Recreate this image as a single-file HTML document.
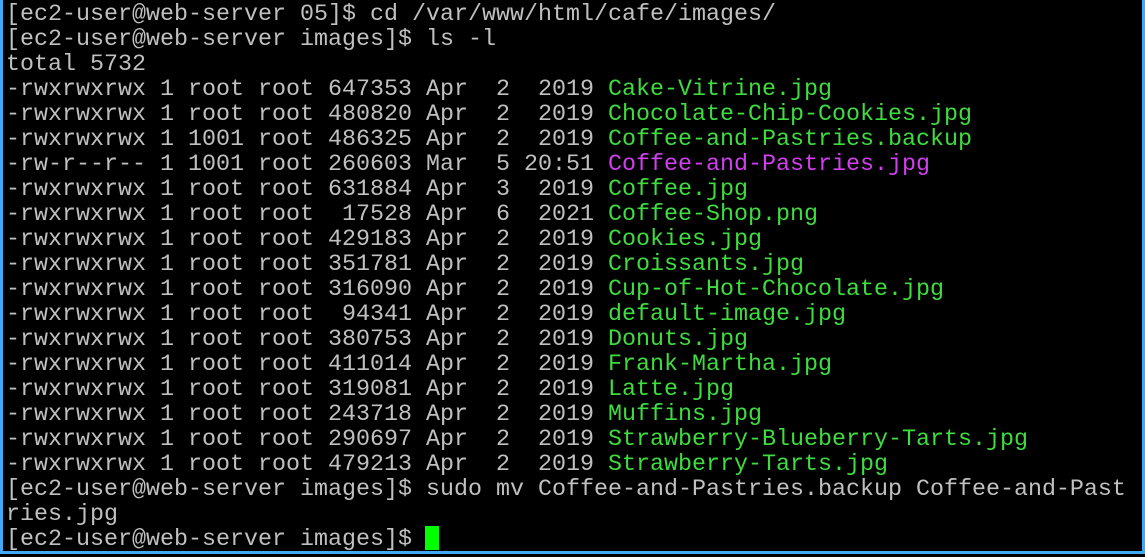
<!DOCTYPE html>
<html><head><style>
html,body{margin:0;padding:0;background:#000;}
body{width:1145px;height:557px;overflow:hidden;position:relative;}
.frame{position:absolute;left:0;top:0;width:1139px;height:551px;border:3px solid #3fa9f5;border-top:none;}
pre{position:absolute;left:6px;top:3px;margin:0;font-family:"Liberation Mono",monospace;font-size:23.33px;line-height:25px;color:#c0c0c0;white-space:pre;}
.g{color:#3fdc3f}.m{color:#d23ff0}
.cur{position:absolute;left:425px;top:526px;width:14px;height:24px;background:#00ff00;}
</style></head><body>
<div class="frame"></div>
<pre>[ec2-user@web-server 05]$ cd /var/www/html/cafe/images/
[ec2-user@web-server images]$ ls -l
total 5732
-rwxrwxrwx 1 root root 647353 Apr  2  2019 <span class="g">Cake-Vitrine.jpg</span>
-rwxrwxrwx 1 root root 480820 Apr  2  2019 <span class="g">Chocolate-Chip-Cookies.jpg</span>
-rwxrwxrwx 1 1001 root 486325 Apr  2  2019 <span class="g">Coffee-and-Pastries.backup</span>
-rw-r--r-- 1 1001 root 260603 Mar  5 20:51 <span class="m">Coffee-and-Pastries.jpg</span>
-rwxrwxrwx 1 root root 631884 Apr  3  2019 <span class="g">Coffee.jpg</span>
-rwxrwxrwx 1 root root  17528 Apr  6  2021 <span class="g">Coffee-Shop.png</span>
-rwxrwxrwx 1 root root 429183 Apr  2  2019 <span class="g">Cookies.jpg</span>
-rwxrwxrwx 1 root root 351781 Apr  2  2019 <span class="g">Croissants.jpg</span>
-rwxrwxrwx 1 root root 316090 Apr  2  2019 <span class="g">Cup-of-Hot-Chocolate.jpg</span>
-rwxrwxrwx 1 root root  94341 Apr  2  2019 <span class="g">default-image.jpg</span>
-rwxrwxrwx 1 root root 380753 Apr  2  2019 <span class="g">Donuts.jpg</span>
-rwxrwxrwx 1 root root 411014 Apr  2  2019 <span class="g">Frank-Martha.jpg</span>
-rwxrwxrwx 1 root root 319081 Apr  2  2019 <span class="g">Latte.jpg</span>
-rwxrwxrwx 1 root root 243718 Apr  2  2019 <span class="g">Muffins.jpg</span>
-rwxrwxrwx 1 root root 290697 Apr  2  2019 <span class="g">Strawberry-Blueberry-Tarts.jpg</span>
-rwxrwxrwx 1 root root 479213 Apr  2  2019 <span class="g">Strawberry-Tarts.jpg</span>
[ec2-user@web-server images]$ sudo mv Coffee-and-Pastries.backup Coffee-and-Past
ries.jpg
[ec2-user@web-server images]$ </pre>
<div class="cur"></div>
</body></html>
